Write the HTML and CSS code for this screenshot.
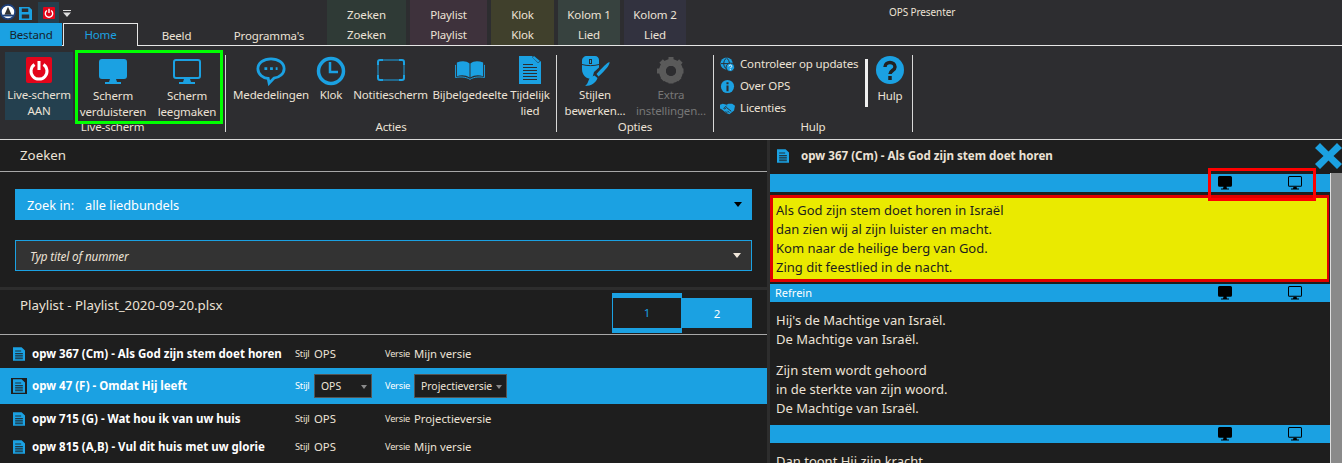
FILE: index.html
```html
<!DOCTYPE html>
<html lang="nl">
<head>
<meta charset="utf-8">
<title>OPS Presenter</title>
<link rel="stylesheet" href="styles.css">
</head>
<body>
<svg class="sprite" xmlns="http://www.w3.org/2000/svg">
  <symbol id="doc" viewBox="0 0 14 16">
    <path fill="#1ba1e2" d="M0 0h10l4 4v12H0z"/>
    <path stroke="#1e1e1e" stroke-width="1" d="M2.500 4.500h7M2.500 7.500h9M2.500 9.500h9M2.500 11.500h9M2.500 13.500h9"/>
  </symbol>
  <symbol id="mon-fill" viewBox="0 0 28 26" preserveAspectRatio="none">
    <path d="M3 0h22a3 3 0 0 1 3 3v14a3 3 0 0 1-3 3H3a3 3 0 0 1-3-3V3a3 3 0 0 1 3-3zM11 20h6l1 3h4v2H6v-2h4z"/>
  </symbol>
  <symbol id="mon-line" viewBox="0 0 28 26" preserveAspectRatio="none">
    <path fill-rule="evenodd" d="M3 0h22a3 3 0 0 1 3 3v14a3 3 0 0 1-3 3H3a3 3 0 0 1-3-3V3a3 3 0 0 1 3-3zm0 2a1 1 0 0 0-1 1v14a1 1 0 0 0 1 1h22a1 1 0 0 0 1-1V3a1 1 0 0 0-1-1z"/>
    <path d="M11 20h6l1 3h4v2H6v-2h4z"/>
  </symbol>
  <symbol id="power" viewBox="0 0 26 26">
    <rect width="26" height="26" rx="2" fill="#e3051b"/>
    <path d="M8.500 7.500a8 8 0 1 0 9 0" fill="none" stroke="#fff" stroke-width="3"/>
    <path d="M13 4v9" stroke="#fff" stroke-width="3"/>
  </symbol>
</svg>

<header class="top">
  <div class="top-left">
    <div class="qat">
      <svg class="qat-logo" viewBox="0 0 18 18"><circle cx="9" cy="9" r="8" fill="#fff" stroke="#1d3f7a" stroke-width="2"/><path d="M9 3l4 9H5z" fill="#333"/><path d="M3 12h12v2H3z" fill="#1d3f7a"/></svg>
      <svg class="qat-save" viewBox="0 0 14 14"><path fill-rule="evenodd" fill="#1ba1e2" d="M0 0h11l3 3v11H0zM3 1.500v4h7v-4zM3 8v4.500h8V8z"/></svg>
      <span class="qat-power"><svg class="qat-power-icon"><use href="#power"/></svg></span>
      <svg class="qat-more" viewBox="0 0 8 7"><path fill="#ddd" d="M0 0h8v1H0zM0 2.500h8L4 7z"/></svg>
    </div>
    <nav class="tabs">
      <span class="tab-file">Bestand</span>
      <span class="tab-home">Home</span>
      <span class="tab tab-beeld">Beeld</span>
      <span class="tab tab-prog">Programma's</span>
    </nav>
  </div>
  <div class="ctx ctx-zoeken"><span>Zoeken</span><span>Zoeken</span></div>
  <div class="ctx ctx-playlist"><span>Playlist</span><span>Playlist</span></div>
  <div class="ctx ctx-klok"><span>Klok</span><span>Klok</span></div>
  <div class="ctx ctx-k1"><span>Kolom 1</span><span>Lied</span></div>
  <div class="ctx ctx-k2"><span>Kolom 2</span><span>Lied</span></div>
  <div class="app-title">OPS Presenter</div>
</header>

<section class="ribbon">
  <div class="group g-live">
    <div class="group-items">
      <div class="btn btn-live"><svg class="ico ico-power"><use href="#power"/></svg><span>Live-scherm<br>AAN</span></div>
      <div class="btn btn-sch"><svg class="ico ico-mon"><use href="#mon-fill"/></svg><span>Scherm<br>verduisteren</span></div>
      <div class="btn btn-sch"><svg class="ico ico-mon"><use href="#mon-line"/></svg><span>Scherm<br>leegmaken</span></div>
    </div>
    <div class="group-label">Live-scherm</div>
  </div>
  <div class="group g-acties">
    <div class="group-items">
      <div class="btn w-med"><svg class="ico" viewBox="0 0 32 32"><path fill="none" stroke="#1ba1e2" stroke-width="3" d="M16 3C8 3 2 7.500 2 13.500S8 24 13 24l1 5 5-5.300c6-.7 11-5 11-10.200C30 7.500 24 3 16 3z"/><path stroke="#1ba1e2" stroke-width="3" stroke-dasharray="3 3" d="M9 13.500h14"/></svg><span>Mededelingen</span></div>
      <div class="btn w-klok"><svg class="ico" viewBox="0 0 30 30"><circle cx="15" cy="15" r="12.500" fill="none" stroke="#1ba1e2" stroke-width="3.500"/><path fill="none" stroke="#1ba1e2" stroke-width="2.500" d="M14 6v10h8"/></svg><span>Klok</span></div>
      <div class="btn w-not"><svg class="ico ico-frame" viewBox="0 0 28 22"><rect x="1" y="1" width="26" height="20" rx="3" fill="none" stroke="#1ba1e2"/><path fill="none" stroke="#1ba1e2" stroke-width="2" d="M1 6V3a2 2 0 0 1 2-2h3M22 1h3a2 2 0 0 1 2 2v3M27 16v3a2 2 0 0 1-2 2h-3M6 21H3a2 2 0 0 1-2-2v-3"/></svg><span>Notitiescherm</span></div>
      <div class="btn w-bij"><svg class="ico ico-book" viewBox="0 0 32 22"><path fill="#1ba1e2" d="M2 2.500c5-2 10-2 13.500 1v15C12 16 7 15.500 2 17zM30 2.500c-5-2-10-2-13.500 1v15c3.500-2.500 8.500-3 13.500-1.500z"/><path fill="none" stroke="#1ba1e2" d="M.5 5v13.500c5-1 11-1 15.500 2 4.500-3 10.500-3 15.500-2V5"/></svg><span>Bijbelgedeelte</span></div>
      <div class="btn w-tij"><svg class="ico ico-doc" viewBox="0 0 22 28"><path fill="#1ba1e2" d="M0 0h14l-1 1 6 6 3-2v23H0z"/><path fill="#1ba1e2" d="M15 0l6 5-2 1.500L13.500 1.500z"/><path stroke="#2d2d30" d="M4 8.500h10M4 11.500h14M4 14.500h14M4 17.500h14M4 20.500h14M4 23.500h14"/></svg><span>Tijdelijk<br>lied</span></div>
    </div>
    <div class="group-label">Acties</div>
  </div>
  <div class="group g-opties">
    <div class="group-items">
      <div class="btn w-sti"><svg class="ico" viewBox="0 0 30 30"><path fill="#1ba1e2" d="M7 0h8c2.500 0 4 2 4 4v7.500L14 16l-2 7C6 23 2 19 2 13V5c0-3 2-5 5-5z"/><path fill="none" stroke="#2d2d30" d="M2 8.500c5 1.500 12 1.500 17 0"/><rect x="9" y="3" width="3" height="5" fill="#2d2d30"/><rect x="10" y="4" width="1" height="3" fill="#1ba1e2"/><path fill="#1ba1e2" d="M29.500 6c.5 3-4 8-11 14.500l-2-2.500C23 11 26.500 7 29.500 6zM14.500 19.500l3 2.500c-1.500 4.500-6 8-12.500 8 3-2 3-5 4.500-7.500 1-1.500 3.500-2.500 5-3z"/></svg><span>Stijlen<br>bewerken...</span></div>
      <div class="btn w-ext is-off"><svg class="ico" viewBox="0 0 30 30"><circle cx="15" cy="15" r="8.500" fill="none" stroke="#5a5a5a" stroke-width="7"/><path stroke="#5a5a5a" stroke-width="5" stroke-dasharray="5 5.750" d="M15 1v28M1 15h28M5.100 5.100l19.800 19.800M24.900 5.100L5.100 24.900" fill="none"/><circle cx="15" cy="15" r="5" fill="#2d2d30"/></svg><span>Extra<br>instellingen...</span></div>
    </div>
    <div class="group-label">Opties</div>
  </div>
  <div class="group g-hulp">
    <div class="group-items">
      <ul class="hulp-list">
        <li><svg class="ico-s" viewBox="0 0 16 16"><circle cx="7" cy="7" r="6.500" fill="#1ba1e2"/><path stroke="#2d2d30" fill="none" d="M1 7h12M7 1c-4 3-4 9 0 12M7 1c4 3 4 9 0 12"/><circle cx="11" cy="11" r="4.500" fill="#1ba1e2" stroke="#2d2d30"/><path stroke="#fff" fill="none" d="M9.500 10c0-2 3-2 3 0 0 1-1.500 1-1.500 2M11 13v1"/></svg>Controleer op updates</li>
        <li><svg class="ico-s" viewBox="0 0 16 16"><circle cx="8" cy="8" r="7" fill="#1ba1e2"/><path stroke="#2d2d30" stroke-width="2.200" d="M8 3.500v2M8 7v6"/></svg>Over OPS</li>
        <li><svg class="ico-s" viewBox="0 0 16 12"><path fill="#1ba1e2" d="M0 2l3-1 4 1 2-1 4 0 3 2-1 5-5 4-3-1-5-4-2-1z"/><path stroke="#2d2d30" fill="none" d="M7 3L4 6c1 1 2 0 3-1l5 4M8 11l-2-2M10 10.500 8 8.500"/></svg>Licenties</li>
      </ul>
      <div class="hulp-bar"></div>
      <div class="btn w-hulp"><svg class="ico" viewBox="0 0 28 28"><circle cx="14" cy="14" r="14" fill="#1ba1e2"/><path fill="none" stroke="#222" stroke-width="3.500" d="M9 11c0-6 10-6 10 0 0 3.500-5 3.500-5 7"/><path stroke="#222" stroke-width="3.500" d="M14 20v4"/></svg><span>Hulp</span></div>
    </div>
    <div class="group-label">Hulp</div>
  </div>
</section>

<main class="main">
  <section class="left">
    <h2 class="left-head">Zoeken</h2>
    <div class="search-block">
      <div class="drop drop-blue"><span class="drop-k">Zoek in:</span><span>alle liedbundels</span><i class="caret caret-dark"></i></div>
      <div class="drop drop-input"><em>Typ titel of nummer</em><i class="caret caret-light"></i></div>
    </div>
    <div class="pl-head">
      <h2 class="pl-title">Playlist - Playlist_2020-09-20.plsx</h2>
      <div class="pl-tabs"><span class="pl-on">1</span><span class="pl-off">2</span></div>
    </div>
    <ul class="rows">
      <li class="row row-a"><svg class="row-ico"><use href="#doc"/></svg><b>opw 367 (Cm) - Als God zijn stem doet horen</b><small>Stijl</small><span>OPS</span><small>Versie</small><span>Mijn versie</span></li>
      <li class="row row-sel"><span class="doc-box"><svg class="row-ico"><use href="#doc"/></svg></span><b>opw 47 (F) - Omdat Hij leeft</b><small>Stijl</small><span class="sel sel-s">OPS<i class="caret caret-gray"></i></span><small>Versie</small><span class="sel sel-v">Projectieversie<i class="caret caret-gray"></i></span></li>
      <li class="row row-c"><svg class="row-ico"><use href="#doc"/></svg><b>opw 715 (G) - Wat hou ik van uw huis</b><small>Stijl</small><span>OPS</span><small>Versie</small><span>Projectieversie</span></li>
      <li class="row row-d"><svg class="row-ico"><use href="#doc"/></svg><b>opw 815 (A,B) - Vul dit huis met uw glorie</b><small>Stijl</small><span>OPS</span><small>Versie</small><span>Mijn versie</span></li>
    </ul>
  </section>

  <section class="right">
    <div class="song">
      <h2 class="song-head"><svg class="row-ico"><use href="#doc"/></svg>opw 367 (Cm) - Als God zijn stem doet horen</h2>
      <div class="bar bar-first"><span class="bar-name"></span><svg class="bar-ico"><use href="#mon-fill"/></svg><svg class="bar-ico"><use href="#mon-line"/></svg></div>
      <div class="verse verse-on"><p>Als God zijn stem doet horen in Israël<br>dan zien wij al zijn luister en macht.<br>Kom naar de heilige berg van God.<br>Zing dit feestlied in de nacht.</p></div>
      <div class="bar"><span class="bar-name">Refrein</span><svg class="bar-ico"><use href="#mon-fill"/></svg><svg class="bar-ico"><use href="#mon-line"/></svg></div>
      <div class="verse verse-two"><p>Hij's de Machtige van Israël.<br>De Machtige van Israël.</p><p>Zijn stem wordt gehoord<br>in de sterkte van zijn woord.<br>De Machtige van Israël.</p></div>
      <div class="bar bar-third"><span class="bar-name"></span><svg class="bar-ico"><use href="#mon-fill"/></svg><svg class="bar-ico"><use href="#mon-line"/></svg></div>
      <div class="verse verse-two"><p>Dan toont Hij zijn kracht</p></div>
    </div>
    <div class="scroll"></div>
    <svg class="close" viewBox="0 0 27 26"><path fill="#1ba1e2" d="M5 0l8.500 8.500L22 0l5 5-8.500 8 8.500 8-5 5-8.500-8.500L5 26l-5-5 8.500-8L0 5z"/></svg>
    <div class="mark-red"></div>
  </section>
</main>
<div class="mark-green"></div>
</body>
</html>
```
FILE: styles.css
```css
* { box-sizing: border-box; }
html, body { margin: 0; padding: 0; }
body {
  position: relative;
  width: 1342px;
  height: 463px;
  overflow: hidden;
  background: #1e1e1e;
  color: #ece2d6;
  font: 11.500px/16px "Noto Sans", "Open Sans", sans-serif;
  letter-spacing: -.15px;
}
h2, p, ul { margin: 0; padding: 0; font-weight: normal; list-style: none; }
.sprite { display: none; }

/* title bar + tabs */
.top { display: flex; height: 46px; background: #2d2d30; border-bottom: 1px solid #e6e6e6; }
.top-left { width: 327px; flex: none; }
.qat { display: flex; align-items: center; height: 23px; }
.qat-logo { width: 16px; height: 16px; margin-top: 1px; }
.qat-save { width: 13px; height: 13px; margin-left: 3px; margin-top: 3px; }
.qat-power { display: flex; align-items: center; justify-content: center; width: 21px; height: 21px; background: #24404f; margin-left: 6px; margin-top: 2px; }
.qat-power-icon { width: 12px; height: 12px; }
.qat-more { width: 8px; height: 7px; margin-left: 4px; margin-top: 4px; }
.tabs { display: flex; height: 23px; }
.tab-file { width: 62px; background: #1ba1e2; color: #16222a; text-align: center; line-height: 24px; }
.tab-home { width: 75px; height: 23px; margin-left: 1px; border: 1px solid #e6e6e6; border-bottom: 0; background: #2d2d30; color: #1ba1e2; text-align: center; line-height: 22px; }
.tab { text-align: center; line-height: 25px; }
.tab-beeld { width: 77px; }
.tab-prog { width: 108px; }
.ctx { display: flex; flex-direction: column; align-items: center; height: 45px; margin-right: 4px; padding-top: 7px; gap: 4px; }
.ctx-zoeken { width: 79px; background: #2f3a36; }
.ctx-playlist { width: 77px; background: #3e323c; }
.ctx-klok { width: 63px; background: #40402c; }
.ctx-k1 { width: 62px; background: #37423f; }
.ctx-k2 { width: 62px; background: #32323f; margin-right: 0; }
.app-title { flex: 1; padding-left: 203px; padding-top: 4px; font-size: 10px; letter-spacing: -.1px; }

/* ribbon */
.ribbon { display: flex; height: 94px; background: #2d2d30; border-bottom: 1px solid #d8d8d8; padding-top: 6px; }
.group { display: flex; flex-direction: column; flex: none; height: 77px; margin-top: 3px; border-right: 1px solid #d8d8d8; }
.group-items { display: flex; height: 65px; margin-top: -3px; }
.group-label { text-align: center; line-height: 16px; margin-top: 2px; }
.g-live { width: 226px; padding-left: 5px; }
.g-live .group-label { padding-right: 5px; }
.g-acties { width: 331px; }
.g-opties { width: 157px; }
.g-hulp { width: 199px; }
.btn { display: flex; flex-direction: column; align-items: center; flex: none; text-align: center; padding-top: 4px; white-space: nowrap; }
.btn span { display: block; margin-top: 1px; }
.ico { width: 30px; height: 30px; flex: none; }
.ico-power { width: 26px; height: 26px; margin-top: 1px; margin-bottom: 3px; }
.ico-mon { width: 28px; height: 26px; fill: #1ba1e2; margin-top: 3px; margin-bottom: 1px; }
.ico-frame { width: 28px; height: 22px; margin-top: 3px; margin-bottom: 5px; }
.ico-book { height: 21px; margin-top: 4px; margin-bottom: 5px; }
.ico-doc { width: 22px; height: 28px; margin-bottom: 2px; }
.btn-live { width: 68px; height: 68px; background: #24404f; }
.btn-sch { width: 74px; }
.btn-live + .btn-sch { margin-left: 3px; }
.btn-sch span { margin-top: 2px; }
.w-med { width: 82px; margin-left: 4px; }
.w-klok { width: 38px; }
.w-not { width: 81px; }
.w-bij { width: 78px; }
.w-tij { width: 42px; }
.w-sti { width: 74px; margin-left: 1px; }
.w-ext { width: 78px; }
.is-off { color: #777; }
.hulp-list { width: 147px; margin-left: 6px; padding-top: 1px; }
.hulp-list li { display: flex; align-items: center; height: 22px; gap: 5px; white-space: nowrap; }
.ico-s { width: 15px; height: 15px; flex: none; }
.hulp-bar { width: 3px; height: 48px; margin-top: 7px; background: #f0f0f0; }
.w-hulp { width: 44px; }
.w-hulp .ico { width: 28px; height: 28px; }
.w-hulp span { margin-top: 4px; }

/* main */
.main { display: flex; height: 323px; }
.left { width: 767px; flex: none; }
.left-head { height: 32px; line-height: 31px; padding-left: 20px; font-size: 13.300px; border-bottom: 1px solid #a8a8a8; letter-spacing: 0; }
.search-block { height: 118px; padding: 17px 15px 16px; border-bottom: 3px solid #2d2d2d; }
.drop { display: flex; align-items: center; position: relative; height: 31px; padding-right: 30px; }
.drop-blue { background: #1ba1e2; color: #fff; font-size: 12.800px; padding-left: 12px; letter-spacing: 0; }
.drop-k { width: 58px; }
.drop-input { margin-top: 20px; background: #333; border: 1px solid #1ba1e2; padding-left: 14px; font-size: 11.700px; }
.caret { position: absolute; width: 0; height: 0; border-left: 4px solid transparent; border-right: 4px solid transparent; border-top: 5px solid #000; right: 10px; top: 13px; }
.caret-light { border-top-color: #f0e6da; top: 12px; }
.caret-gray { border-left-width: 3px; border-right-width: 3px; border-top-width: 4px; border-top-color: #8a8a8a; right: 4px; top: 10px; }
.pl-head { display: flex; justify-content: space-between; height: 45px; padding: 3px 15px 0 20px; border-bottom: 1px solid #a8a8a8; }
.pl-title { font-size: 13.300px; padding-top: 4px; letter-spacing: 0; }
.pl-tabs { display: flex; align-items: center; height: 40px; }
.pl-on { width: 70px; height: 40px; background: #1e1e1e; border: solid #1ba1e2; border-width: 5px 1px; color: #1ba1e2; text-align: center; line-height: 29px; }
.pl-off { width: 70px; height: 30px; background: #1ba1e2; color: #fff; text-align: center; line-height: 31px; }
.row { display: grid; grid-template-columns: 19px 263px 19px 71px 29px 1fr; align-items: center; padding-left: 13px; white-space: nowrap; letter-spacing: 0; font-size: 11.300px; }
.row b { font-weight: 700; font-size: 11.500px; color: #fff; }
.row small { font-size: 9.200px; letter-spacing: -.2px; }
.row-a { height: 33px; padding-top: 5px; }
.row-sel { height: 36px; background: #1ba1e2; color: #fff; }
.row-c { height: 30px; }
.row-d { height: 25px; }
.row-ico { width: 12px; height: 14px; display: block; }
.doc-box { display: flex; align-items: center; justify-content: center; width: 16px; height: 16px; margin-left: -2px; background: #1e1e1e; }
.sel { display: block; position: relative; height: 24px; line-height: 22px; padding-left: 6px; background: #1e1e1e; border: 1px solid #555; color: #f0e6da; font-size: 10.400px; }
.sel-s { width: 58px; }
.sel-v { width: 93px; }

/* right column */
.right { position: relative; display: flex; width: 575px; flex: none; border-left: 3px solid #2d2d2d; }
.song { width: 560px; flex: none; }
.song-head { display: flex; align-items: center; gap: 12px; height: 32px; padding-left: 7px; font-size: 11.600px; font-weight: 700; letter-spacing: 0; }
.bar { display: flex; align-items: center; gap: 56px; height: 18px; margin-top: 2px; background: #1ba1e2; padding-right: 28px; color: #fff; font-size: 11px; letter-spacing: 0; }
.bar-name { flex: 1; padding-left: 5px; line-height: 20px; }
.bar-first { margin-bottom: 3px; }
.bar-third { margin-top: 7px; }
.bar-ico { width: 14px; height: 14px; fill: #000; }
.verse { padding: 7px 6px 0; font-size: 13px; line-height: 19px; letter-spacing: 0; }
.verse-two { padding-top: 9px; }
.verse p + p { margin-top: 12px; }
.verse-on { height: 87px; background: #eaea00; color: #1e1e1e; border: 3px solid #e00000; border-right-width: 2px; padding: 3px 3px 0; margin-right: 1px; }
.scroll { flex: 1; margin-top: 33px; background: #8a8a8a; border-left: 1px solid #ddd; }
.close { position: absolute; right: 0; top: 3px; width: 27px; height: 26px; }
.mark-red { position: absolute; left: 438px; top: 28px; width: 108px; height: 33px; border: 3px solid #f00; }
.mark-green { position: absolute; left: 75px; top: 50px; width: 148px; height: 74px; border: 3px solid #0f0; }
```
